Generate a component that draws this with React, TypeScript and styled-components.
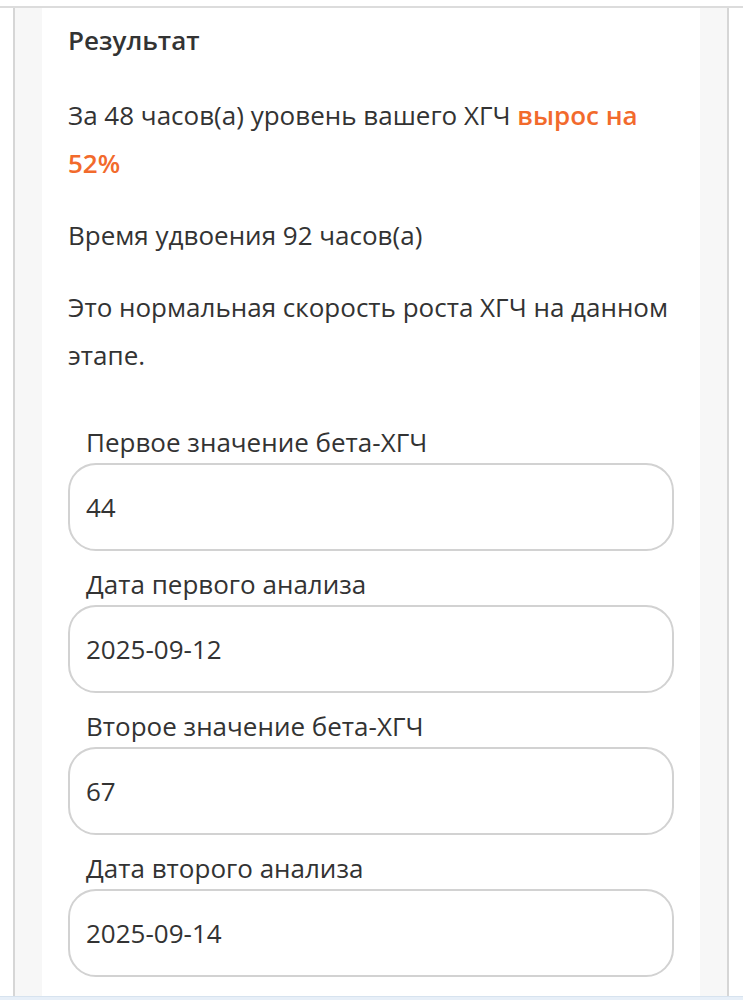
import * as React from "react";
import styled, { createGlobalStyle } from "styled-components";

const GlobalStyles = createGlobalStyle`
  html, body {
    margin: 0;
    padding: 0;
    background: #ffffff;
    font-family: "Open Sans", "Noto Sans", sans-serif;
    color: #333333;
  }
  * { box-sizing: border-box; }
`;

const TopRule = styled.div`
  margin-top: 6px;
  height: 2px;
  background: #dcdcdc;
`;

const Shell = styled.div`
  margin: 0 14px 0 13px;
  border-left: 2px solid #d6d6d6;
  border-right: 2px solid #d6d6d6;
  background: #f7f7f7;
  padding: 0 27px;
  display: flex;
  height: 988px;
`;

const Card = styled.section`
  flex: 1;
  background: #ffffff;
  padding: 14px 26px 0;
`;

const Title = styled.h2`
  margin: 0 0 33px;
  font-size: 26px;
  line-height: 36px;
  font-weight: 600;
  color: #333333;
`;

const Para = styled.p`
  margin: 0 0 24px;
  font-size: 26px;
  line-height: 48px;
  color: #333333;
`;

const Accent = styled.span`
  color: #f26a2c;
  font-weight: 600;
`;

const Form = styled.div`
  padding-top: 22px;
  display: flex;
  flex-direction: column;
`;

const Field = styled.label`
  display: flex;
  flex-direction: column;
  margin-bottom: 16px;
`;

const LabelText = styled.span`
  padding-left: 18px;
  font-size: 26px;
  line-height: 34px;
  margin-bottom: 4px;
  color: #333333;
`;

const Input = styled.input`
  height: 88px;
  width: 100%;
  border: 2px solid #d2d2d2;
  border-radius: 28px;
  padding: 0 16px;
  font-family: "Open Sans", "Noto Sans", sans-serif;
  font-size: 26px;
  color: #333333;
  background: #ffffff;
  outline: none;
`;

const BottomRule = styled.div`
  height: 4px;
  background: #e7eff8;
  border-top: 1px solid #d7e3ef;
`;

const fields = [
  { label: "Первое значение бета-ХГЧ", value: "44" },
  { label: "Дата первого анализа", value: "2025-09-12" },
  { label: "Второе значение бета-ХГЧ", value: "67" },
  { label: "Дата второго анализа", value: "2025-09-14" },
];

export const App = () => {
  return (
    <>
      <GlobalStyles />
      <TopRule />
      <Shell>
        <Card>
          <Title>Результат</Title>
          <Para>
            За 48 часов(а) уровень вашего ХГЧ <Accent>вырос на 52%</Accent>
          </Para>
          <Para>Время удвоения 92 часов(а)</Para>
          <Para>Это нормальная скорость роста ХГЧ на данном этапе.</Para>
          <Form>
            {fields.map((f) => (
              <Field key={f.label}>
                <LabelText>{f.label}</LabelText>
                <Input defaultValue={f.value} readOnly />
              </Field>
            ))}
          </Form>
        </Card>
      </Shell>
      <BottomRule />
    </>
  );
};

export default App;
